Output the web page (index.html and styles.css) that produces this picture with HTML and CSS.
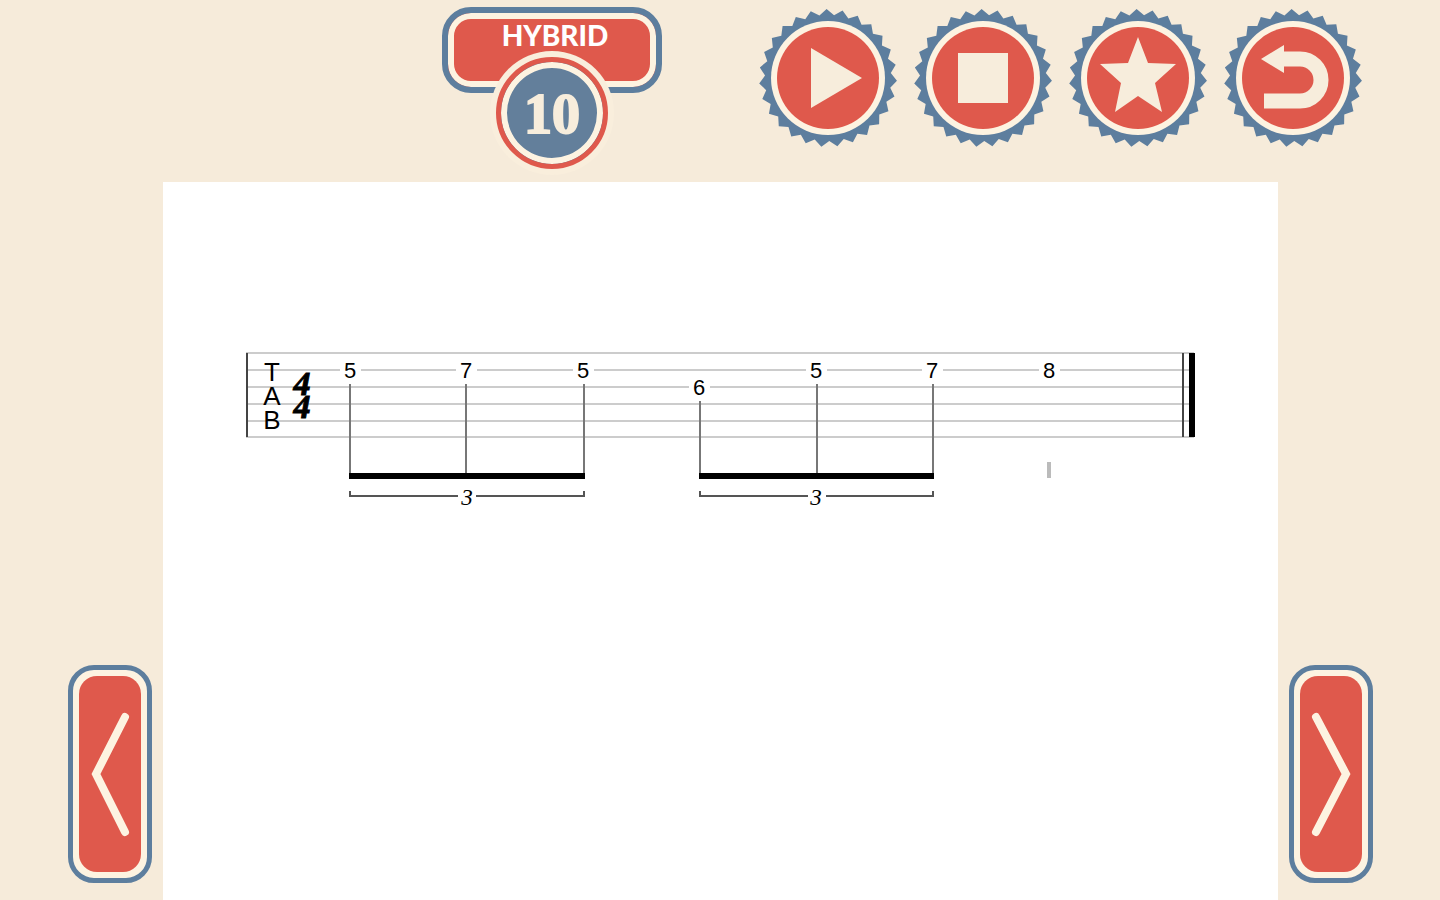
FILE: index.html
```html
<!DOCTYPE html>
<html lang="en">
<head>
  <meta charset="UTF-8">
  <title>Hybrid - Lick 10</title>
  <link rel="stylesheet" href="styles.css">
</head>
<body>

  <svg class="defs" aria-hidden="true">
    <symbol id="gear" viewBox="0 0 138 138">
      <polygon id="gear-teeth" class="blue"></polygon>
      <circle class="light" cx="69" cy="69" r="57"></circle>
      <circle class="red" cx="69" cy="69" r="51"></circle>
    </symbol>
  </svg>

  <header class="toolbar">
    <div class="level">
      <div class="level-name">HYBRID</div>
      <div class="level-number">10</div>
    </div>

    <div class="controls">
      <button class="round-btn" aria-label="Play">
        <svg viewBox="0 0 138 138">
          <use href="#gear"></use>
          <polygon class="cream" points="52,39 103,69 52,99"></polygon>
        </svg>
      </button>
      <button class="round-btn" aria-label="Stop">
        <svg viewBox="0 0 138 138">
          <use href="#gear"></use>
          <rect class="cream" x="44" y="44" width="50" height="50"></rect>
        </svg>
      </button>
      <button class="round-btn" aria-label="Favorite">
        <svg viewBox="0 0 138 138">
          <use href="#gear"></use>
          <polygon class="cream" points="69,28 79,54 107,55 86,74 93,103 69,87 46,103 52,74 31,55 59,54"></polygon>
        </svg>
      </button>
      <button class="round-btn" aria-label="Back">
        <svg viewBox="0 0 138 138">
          <use href="#gear"></use>
          <path class="back-line" d="M56 50H76A21 21 0 0 1 76 92H40"></path>
          <polygon class="cream" points="37,50 60,36 60,64"></polygon>
        </svg>
      </button>
    </div>
  </header>

  <main class="stage">
    <div class="side side-left">
      <button class="nav-btn" aria-label="Previous">
        <svg viewBox="0 0 62 196"><path d="M46 41L17 98L46 156"></path></svg>
      </button>
    </div>

    <div class="paper">
      <svg class="tab" viewBox="0 0 1115 400">
        <!-- strings -->
        <path class="string" d="M83 171H1031M83 188H177M198 188H293M314 188H410M431 188H643M664 188H759M780 188H876M897 188H1031M83 205H526M547 205H1031M83 222H1031M83 239H1031M83 255H1031"></path>
        <!-- bar lines -->
        <path class="bar" d="M84 171V255M1020 171V255"></path>
        <rect x="1026" y="171" width="6" height="84"></rect>

        <g class="clef">
          <text x="109" y="199">T</text>
          <text x="109" y="223">A</text>
          <text x="109" y="247">B</text>
        </g>
        <g class="time">
          <text x="139" y="213">4</text>
          <text x="139" y="236">4</text>
        </g>

        <!-- stems and beams -->
        <path class="stem" d="M187 202V292M303 202V292M421 202V292M537 219V292M654 202V292M770 202V292"></path>
        <rect x="186" y="291" width="236" height="6"></rect>
        <rect x="536" y="291" width="235" height="6"></rect>
        <path class="half-stem" d="M886 280V296"></path>

        <g class="note">
          <text x="187" y="196">5</text>
          <text x="303" y="196">7</text>
          <text x="420" y="196">5</text>
          <text x="536" y="213">6</text>
          <text x="653" y="196">5</text>
          <text x="769" y="196">7</text>
          <text x="886" y="196">8</text>
        </g>

        <!-- triplets -->
        <path class="bracket" d="M187 309V314H295M313 314H421V309M537 309V314H645M663 314H770V309"></path>
        <g class="triplet">
          <text x="304" y="323">3</text>
          <text x="653" y="323">3</text>
        </g>
      </svg>
    </div>

    <div class="side side-right">
      <button class="nav-btn" aria-label="Next">
        <svg viewBox="0 0 62 196"><path d="M16 41L46 98L16 156"></path></svg>
      </button>
    </div>
  </main>

  <script>
    // Teeth around the round buttons
    const teeth = 27;
    const points = [];
    for (let i = 0; i < teeth * 2; i++) {
      const radius = i % 2 === 0 ? 69 : 63;
      const angle = Math.PI * i / teeth - Math.PI / 2 - 0.02;
      points.push((69 + radius * Math.cos(angle)) + "," + (69 + radius * Math.sin(angle)));
    }
    document.getElementById("gear-teeth").setAttribute("points", points.join(" "));
  </script>

</body>
</html>
```
FILE: styles.css
```css
* {
  box-sizing: border-box;
}
body {
  margin: 0;
  min-height: 100vh;
  display: flex;
  flex-direction: column;
  background: #f6ebda;
  font-family: "Liberation Sans", Arial, sans-serif;
}
button {
  padding: 0;
  border: none;
  background: none;
  cursor: pointer;
}
svg {
  display: block;
}
.defs {
  position: absolute;
  width: 0;
  height: 0;
}
.blue {
  fill: #5d7e9e;
}
.red {
  fill: #df594c;
}
.light {
  fill: #fdf3e1;
}
.cream {
  fill: #f7eddc;
}

/* top bar */
.toolbar {
  display: flex;
  justify-content: flex-end;
  align-items: flex-start;
  gap: 97px;
  height: 182px;
  padding: 7px 78px 0 0;
}
.level {
  position: relative;
  width: 220px;
}
.level-name {
  height: 86px;
  padding: 4px 0 0 6px;
  border: 6px solid #5d7e9e;
  border-radius: 29px;
  background: #df594c;
  box-shadow: inset 0 0 0 6px #fdf3e1;
  color: #fff;
  font-family: Lato, sans-serif;
  font-size: 28px;
  font-weight: 900;
  line-height: 36px;
  text-align: center;
}
.level-number {
  position: absolute;
  top: 50px;
  left: 54px;
  width: 112px;
  height: 112px;
  border: 5px solid #df594c;
  border-radius: 50%;
  background: #637f9b;
  box-shadow: 0 0 0 6px #f9eedc, inset 0 0 0 6px #fdf3e1;
  color: #f7eddc;
  font-family: "Liberation Serif", serif;
  font-size: 56px;
  font-weight: bold;
  line-height: 104px;
  text-align: center;
  -webkit-text-stroke: 2px #f7eddc;
}
.controls {
  display: flex;
  gap: 17px;
  padding-top: 2px;
}
.round-btn,
.round-btn svg {
  width: 138px;
  height: 138px;
}
.back-line {
  fill: none;
  stroke: #f7eddc;
  stroke-width: 15;
}

/* sheet with arrows on both sides */
.stage {
  flex: 1;
  display: flex;
}
.side {
  padding-bottom: 17px;
  display: flex;
  align-items: flex-end;
}
.side-left {
  width: 163px;
  justify-content: flex-end;
  padding-right: 11px;
}
.side-right {
  width: 162px;
  padding-left: 11px;
}
.nav-btn {
  width: 84px;
  height: 218px;
  padding: 6px;
  border: 5px solid #5d7e9e;
  border-radius: 26px;
  background: #fdf3e1;
}
.nav-btn svg {
  width: 62px;
  height: 196px;
  border-radius: 18px;
  background: #df594c;
}
.nav-btn path {
  fill: none;
  stroke: #fdf3e1;
  stroke-width: 8;
  stroke-linecap: round;
}
.paper {
  flex: 1;
  background: #fff;
}

/* tablature */
.tab {
  width: 100%;
}
.tab text {
  text-anchor: middle;
}
.tab path {
  fill: none;
}
.string {
  stroke: #ccc;
  stroke-width: 2;
}
.bar {
  stroke: #444;
  stroke-width: 2;
}
.stem {
  stroke: #777;
  stroke-width: 2;
}
.half-stem {
  stroke: #bbb;
  stroke-width: 4;
}
.bracket {
  stroke: #555;
  stroke-width: 2;
}
.clef {
  font-size: 26px;
}
.note {
  font-size: 22px;
}
.time {
  font-family: "Liberation Serif", serif;
  font-size: 34px;
  font-weight: bold;
  font-style: italic;
  stroke: #000;
  stroke-width: 1;
}
.triplet {
  font-family: "Liberation Serif", serif;
  font-size: 23px;
  font-style: italic;
}
```
